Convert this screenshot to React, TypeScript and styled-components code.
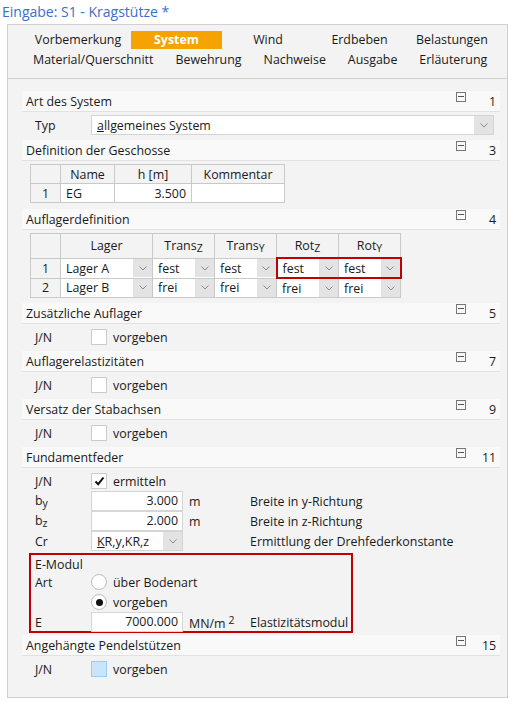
import React from "react";
import styled, { createGlobalStyle } from "styled-components";

const GlobalStyle = createGlobalStyle`
    html, body {
        margin: 0;
        padding: 0;
        background: #ffffff;
    }
    body {
        font-family: "Open Sans", "Noto Sans", "Liberation Sans", sans-serif;
        font-size: 12.4px;
        color: #1a1a1a;
    }
`;

const Page = styled.div`
    width: 514px;
    padding: 0 6px 6px 7px;
    box-sizing: border-box;
`;

const Title = styled.div`
    height: 24px;
    line-height: 24px;
    margin-left: -5px;
    font-size: 14px;
    color: #3a70c9;
`;

const Panel = styled.div`
    border: 1px solid #d0d0d0;
    background: #f3f3f3;
    height: 674px;
    box-sizing: border-box;
`;

const TabBar = styled.div`
    padding: 6px 0 9px 0;
    border-bottom: 1px solid #d2d2d2;
    display: flex;
    flex-direction: column;
    gap: 2px;
`;

const TabRowTop = styled.div`
    display: grid;
    grid-template-columns: 106px 91px 92px 91px 94px;
    padding-left: 17px;
    height: 18px;
`;

const TabRowBottom = styled.div`
    display: flex;
    gap: 22px;
    padding-left: 25px;
    height: 18px;
`;

const Tab = styled.div<{ $active?: boolean }>`
    height: 18px;
    line-height: 18px;
    text-align: center;
    white-space: nowrap;
    background: ${(p) => (p.$active ? "#f5a300" : "transparent")};
    color: ${(p) => (p.$active ? "#ffffff" : "#1a1a1a")};
    font-weight: ${(p) => (p.$active ? 700 : 400)};
`;

const Content = styled.div`
    padding: 12px 7px 0 14px;
    display: flex;
    flex-direction: column;
`;

const SectionHeader = styled.div`
    height: 20px;
    display: flex;
    align-items: center;
    padding-left: 4px;
    background: #f9f9f9;
    border-bottom: 1px solid #e2e2e2;
    margin-bottom: 3px;
`;

const HeaderTitle = styled.div`
    flex: 1;
`;

const CollapseIcon = styled.div`
    width: 8px;
    height: 8px;
    border: 1px solid #777;
    position: relative;
    margin-top: -8px;
    margin-right: 16px;
    &::after {
        content: "";
        position: absolute;
        left: 1px;
        right: 1px;
        top: 3px;
        height: 1px;
        background: #555;
    }
`;

const HeaderNumber = styled.div`
    width: 14px;
    text-align: right;
    margin-right: 4px;
`;

const Row = styled.div<{ $gap?: number }>`
    height: 20px;
    display: flex;
    align-items: center;
    padding-left: 13px;
    margin-bottom: ${(p) => p.$gap ?? 0}px;
`;

const Label = styled.div`
    width: 56px;
    flex-shrink: 0;
`;

const Small = styled.span`
    font-size: 10.5px;
    vertical-align: -2px;
`;

const Select = styled.div<{ $width: number }>`
    width: ${(p) => p.$width}px;
    height: 20px;
    box-sizing: border-box;
    background: #ffffff;
    border: 1px solid #d4d4d4;
    display: flex;
    align-items: center;
`;

const SelectText = styled.div`
    flex: 1;
    padding-left: 5px;
    white-space: nowrap;
    overflow: hidden;
`;

const ArrowBox = styled.div`
    width: 19px;
    flex-shrink: 0;
    align-self: stretch;
    background: #e3e3e3;
    display: flex;
    align-items: center;
    justify-content: center;
`;

const TableWrap = styled.div<{ $gap: number }>`
    padding-left: 8px;
    margin-bottom: ${(p) => p.$gap}px;
`;

const Grid = styled.table`
    border-collapse: collapse;
    table-layout: fixed;
    font-size: 12.4px;
`;

const HeadCell = styled.th<{ $width: number; $height: number }>`
    width: ${(p) => p.$width - 1}px;
    height: ${(p) => p.$height}px;
    padding: 0;
    font-weight: 400;
    border: 1px solid #c9c9c9;
    background: #f3f3f3;
    text-align: center;
    white-space: nowrap;
`;

const NumCell = styled.td`
    height: 18px;
    padding: 0;
    border: 1px solid #c9c9c9;
    background: #f3f3f3;
    text-align: center;
`;

const redEdges = (side?: "left" | "right") =>
    side
        ? `border-top: 2px solid #c00000; border-bottom: 2px solid #c00000; border-${side}: 2px solid #c00000;`
        : "";

const Cell = styled.td<{ $align?: string }>`
    height: 18px;
    padding: 0 5px;
    border: 1px solid #c9c9c9;
    background: #ffffff;
    text-align: ${(p) => p.$align ?? "left"};
`;

const ComboCell = styled.td<{ $mark?: "left" | "right" }>`
    height: 18px;
    padding: 0;
    border: 1px solid #c9c9c9;
    background: #ffffff;
    ${(p) => redEdges(p.$mark)}
`;

const ComboInner = styled.div`
    display: flex;
    height: 18px;
    align-items: center;
`;

const CheckBox = styled.div<{ $tone?: "blue" }>`
    width: 16px;
    height: 16px;
    box-sizing: border-box;
    border: 1px solid ${(p) => (p.$tone === "blue" ? "#9fcbee" : "#cccccc")};
    background: ${(p) => (p.$tone === "blue" ? "#cce4f7" : "#ffffff")};
    margin-right: 6px;
    display: flex;
    align-items: center;
    justify-content: center;
`;

const Radio = styled.div<{ $on?: boolean }>`
    width: 16px;
    height: 16px;
    box-sizing: border-box;
    border: 1px solid #bdbdbd;
    border-radius: 50%;
    background: #ffffff;
    margin-right: 6px;
    display: flex;
    align-items: center;
    justify-content: center;
    &::after {
        content: "";
        width: 7px;
        height: 7px;
        border-radius: 50%;
        background: ${(p) => (p.$on ? "#111" : "transparent")};
    }
`;

const Text = styled.div`
    white-space: nowrap;
`;

const NumberInput = styled.div`
    width: 92px;
    height: 20px;
    box-sizing: border-box;
    background: #ffffff;
    border: 1px solid #d6d6d6;
    text-align: right;
    padding-right: 4px;
    line-height: 18px;
`;

const Unit = styled.div`
    width: 67px;
    padding-left: 6px;
    box-sizing: border-box;
    white-space: nowrap;
`;

const Sup = styled.span`
    font-size: 10.5px;
    vertical-align: 4px;
    margin-left: 3px;
`;

const Highlight = styled.div`
    margin-left: 7px;
    width: 324px;
    height: 80px;
    box-sizing: border-box;
    border: 2px solid #c00000;
    padding-top: 1px;
    margin-bottom: 2px;
`;

const BoxRow = styled.div<{ $h?: number }>`
    height: ${(p) => p.$h ?? 20}px;
    display: flex;
    align-items: center;
    padding-left: 4px;
`;

function Chevron() {
    return (
        <svg width="8" height="5" viewBox="0 0 8 5">
            <polyline points="0.5,0.5 4,4 7.5,0.5" fill="none" stroke="#8a8a8a" strokeWidth="1" />
        </svg>
    );
}

function Header({ title, num }: { title: string; num: number }) {
    return (
        <SectionHeader>
            <HeaderTitle>{title}</HeaderTitle>
            <CollapseIcon />
            <HeaderNumber>{num}</HeaderNumber>
        </SectionHeader>
    );
}

function Check({ checked, tone }: { checked?: boolean; tone?: "blue" }) {
    return (
        <CheckBox $tone={tone}>
            {checked && (
                <svg width="11" height="10" viewBox="0 0 11 10">
                    <polyline points="1.5,5.5 4.2,8.2 9.5,1.5" fill="none" stroke="#111" strokeWidth="2" />
                </svg>
            )}
        </CheckBox>
    );
}

function Combo({ value, mark }: { value: string; mark?: "left" | "right" }) {
    return (
        <ComboCell $mark={mark}>
            <ComboInner>
                <SelectText>{value}</SelectText>
                <ArrowBox>
                    <Chevron />
                </ArrowBox>
            </ComboInner>
        </ComboCell>
    );
}

function YesNo({ gap, tone }: { gap: number; tone?: "blue" }) {
    return (
        <Row $gap={gap}>
            <Label>J/N</Label>
            <Check tone={tone} />
            <Text>vorgeben</Text>
        </Row>
    );
}

export default function App() {
    return (
        <>
            <GlobalStyle />
            <Page>
                <Title>Eingabe: S1 - Kragstütze *</Title>
                <Panel>
                    <TabBar>
                        <TabRowTop>
                            <Tab>Vorbemerkung</Tab>
                            <Tab $active>System</Tab>
                            <Tab>Wind</Tab>
                            <Tab>Erdbeben</Tab>
                            <Tab>Belastungen</Tab>
                        </TabRowTop>
                        <TabRowBottom>
                            <Tab>Material/Querschnitt</Tab>
                            <Tab>Bewehrung</Tab>
                            <Tab>Nachweise</Tab>
                            <Tab>Ausgabe</Tab>
                            <Tab>Erläuterung</Tab>
                        </TabRowBottom>
                    </TabBar>
                    <Content>
                        <Header title="Art des System" num={1} />
                        <Row $gap={5}>
                            <Label>Typ</Label>
                            <Select $width={403}>
                                <SelectText>
                                    <u>a</u>llgemeines System
                                </SelectText>
                                <ArrowBox>
                                    <Chevron />
                                </ArrowBox>
                            </Select>
                        </Row>

                        <Header title="Definition der Geschosse" num={3} />
                        <TableWrap $gap={6}>
                            <Grid>
                                <thead>
                                    <tr>
                                        <HeadCell $width={30} $height={18} />
                                        <HeadCell $width={54} $height={18}>Name</HeadCell>
                                        <HeadCell $width={77} $height={18}>h [m]</HeadCell>
                                        <HeadCell $width={93} $height={18}>Kommentar</HeadCell>
                                    </tr>
                                </thead>
                                <tbody>
                                    <tr>
                                        <NumCell>1</NumCell>
                                        <Cell>EG</Cell>
                                        <Cell $align="right">3.500</Cell>
                                        <Cell />
                                    </tr>
                                </tbody>
                            </Grid>
                        </TableWrap>

                        <Header title="Auflagerdefinition" num={4} />
                        <TableWrap $gap={5}>
                            <Grid>
                                <thead>
                                    <tr>
                                        <HeadCell $width={30} $height={23} />
                                        <HeadCell $width={92} $height={23}>Lager</HeadCell>
                                        <HeadCell $width={62} $height={23}>Trans<Small>Z</Small></HeadCell>
                                        <HeadCell $width={62} $height={23}>Trans<Small>Y</Small></HeadCell>
                                        <HeadCell $width={62} $height={23}>Rot<Small>Z</Small></HeadCell>
                                        <HeadCell $width={62} $height={23}>Rot<Small>Y</Small></HeadCell>
                                    </tr>
                                </thead>
                                <tbody>
                                    <tr>
                                        <NumCell>1</NumCell>
                                        <Combo value="Lager A" />
                                        <Combo value="fest" />
                                        <Combo value="fest" />
                                        <Combo value="fest" mark="left" />
                                        <Combo value="fest" mark="right" />
                                    </tr>
                                    <tr>
                                        <NumCell>2</NumCell>
                                        <Combo value="Lager B" />
                                        <Combo value="frei" />
                                        <Combo value="frei" />
                                        <Combo value="frei" />
                                        <Combo value="frei" />
                                    </tr>
                                </tbody>
                            </Grid>
                        </TableWrap>

                        <Header title="Zusätzliche Auflager" num={5} />
                        <YesNo gap={4} />
                        <Header title="Auflagerelastizitäten" num={7} />
                        <YesNo gap={4} />
                        <Header title="Versatz der Stabachsen" num={9} />
                        <YesNo gap={4} />

                        <Header title="Fundamentfeder" num={11} />
                        <Row>
                            <Label>J/N</Label>
                            <Check checked />
                            <Text>ermitteln</Text>
                        </Row>
                        <Row>
                            <Label>b<Small>y</Small></Label>
                            <NumberInput>3.000</NumberInput>
                            <Unit>m</Unit>
                            <Text>Breite in y-Richtung</Text>
                        </Row>
                        <Row>
                            <Label>b<Small>z</Small></Label>
                            <NumberInput>2.000</NumberInput>
                            <Unit>m</Unit>
                            <Text>Breite in z-Richtung</Text>
                        </Row>
                        <Row $gap={2}>
                            <Label>Cr</Label>
                            <Select $width={92}>
                                <SelectText>
                                    <u>K</u>R,y,KR,z
                                </SelectText>
                                <ArrowBox>
                                    <Chevron />
                                </ArrowBox>
                            </Select>
                            <Unit />
                            <Text>Ermittlung der Drehfederkonstante</Text>
                        </Row>

                        <Highlight>
                            <BoxRow $h={16}>
                                <Text>E-Modul</Text>
                            </BoxRow>
                            <BoxRow>
                                <Label>Art</Label>
                                <Radio />
                                <Text>über Bodenart</Text>
                            </BoxRow>
                            <BoxRow>
                                <Label />
                                <Radio $on />
                                <Text>vorgeben</Text>
                            </BoxRow>
                            <BoxRow>
                                <Label>E</Label>
                                <NumberInput>7000.000</NumberInput>
                                <Unit>
                                    MN/m<Sup>2</Sup>
                                </Unit>
                                <Text>Elastizitätsmodul</Text>
                            </BoxRow>
                        </Highlight>

                        <Header title="Angehängte Pendelstützen" num={15} />
                        <YesNo gap={0} tone="blue" />
                    </Content>
                </Panel>
            </Page>
        </>
    );
}
